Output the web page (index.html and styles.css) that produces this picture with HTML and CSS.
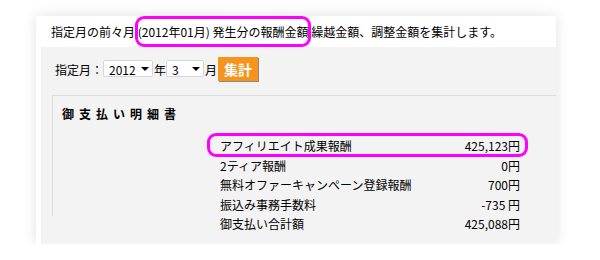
FILE: index.html
```html
<!DOCTYPE html>
<html lang="ja">
<head>
    <meta charset="UTF-8">
    <title>報酬集計</title>
    <link rel="stylesheet" href="styles.css">
</head>
<body>
    <div class="card">
        <p class="intro">指定月の前々月 <span class="mark">(2012年01月) 発生分の報酬金額</span> 繰越金額、調整金額を集計します。</p>

        <div class="panel">
            <form class="month-form">
                <label>指定月：</label>
                <span class="select-wrap year">
                    <select><option>2012</option></select>
                </span>
                <span>年</span>
                <span class="select-wrap month">
                    <select><option>3</option></select>
                </span>
                <span>月</span>
                <button type="button" class="btn-sum">集計</button>
            </form>

            <section class="statement">
                <h2>御支払い明細書</h2>
                <div class="rows">
                    <div class="row mark-row"><span>アフィリエイト成果報酬</span><span>425,123円</span></div>
                    <div class="row"><span>2ティア報酬</span><span>0円</span></div>
                    <div class="row"><span>無料オファーキャンペーン登録報酬</span><span>700円</span></div>
                    <div class="row"><span>振込み事務手数料</span><span>-735&nbsp;円</span></div>
                    <div class="row"><span>御支払い合計額</span><span>425,088円</span></div>
                </div>
            </section>
        </div>
    </div>
</body>
</html>
```

FILE: styles.css
```css
body {
    margin: 0;
    background-color: #fff;
    font-family: "MS UI Gothic", "Noto Sans CJK JP", sans-serif;
    font-size: 12px;
    color: #000;
}
.card {
    margin: 16px 0 0 36px;
    width: 520px;
    height: 228px;
    background-color: #fff;
    box-shadow: 0 0 14px rgba(0,0,0,0.12);
    overflow: hidden;
}
.intro {
    margin: 0;
    height: 31px;
    line-height: 31px;
    padding-left: 15px;
    white-space: nowrap;
}
.mark {
    position: relative;
}
.mark::after {
    content: "";
    position: absolute;
    left: -3px;
    right: -3px;
    top: -7px;
    bottom: -7px;
    border: 3px solid #ff00ff;
    border-radius: 9px;
}
.panel {
    margin-left: 5px;
    height: 197px;
    background-color: #f3f3f3;
}
.month-form {
    display: flex;
    align-items: center;
    height: 24px;
    padding: 10px 0 0 14px;
}
.select-wrap {
    position: relative;
    display: inline-block;
    margin-right: 1px;
}
.select-wrap select {
    appearance: none;
    -webkit-appearance: none;
    height: 17px;
    border: 1px solid #d4d7e0;
    border-radius: 2px;
    background-color: #fff;
    font: inherit;
    padding: 0 0 0 5px;
    color: #000;
}
.year select {
    width: 50px;
}
.month select {
    width: 38px;
}
.select-wrap::after {
    content: "";
    position: absolute;
    right: 4px;
    top: 7px;
    border-left: 4px solid transparent;
    border-right: 4px solid transparent;
    border-top: 4px solid #000;
}
.btn-sum {
    margin-left: 1px;
    width: 40px;
    height: 24px;
    padding: 0;
    border: none;
    background-color: #f7941d;
    color: #fff;
    font: bold 14px "Noto Sans CJK JP", sans-serif;
    box-shadow: 1px 1px 0 #8a8a8a;
}
.statement {
    margin: 14px 0 0 11px;
    height: 120px;
    border-top: 1px solid #dcdcdc;
    border-left: 1px solid #dcdcdc;
}
.statement h2 {
    margin: 0;
    padding: 10px 0 0 9px;
    font-size: 12px;
    font-weight: bold;
    letter-spacing: 5px;
    line-height: 16px;
}
.rows {
    width: 300px;
    margin: 14px 0 0 167px;
}
.row {
    display: flex;
    justify-content: space-between;
    height: 19.5px;
    line-height: 19.5px;
}
.mark-row {
    position: relative;
}
.mark-row::after {
    content: "";
    position: absolute;
    left: -13px;
    right: -8px;
    top: -3px;
    bottom: -1px;
    border: 3px solid #ff00ff;
    border-radius: 9px;
}
```
